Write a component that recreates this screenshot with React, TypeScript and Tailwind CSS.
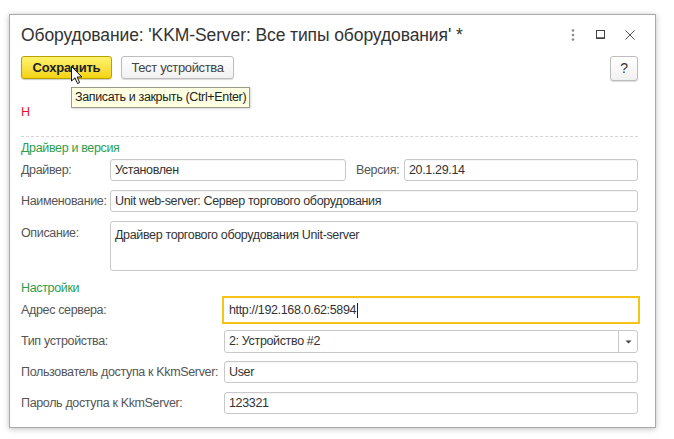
import React from "react";

const font = { fontFamily: '"Liberation Sans", Arial, sans-serif' };

function Field({ value, className = "" }: { value: string; className?: string }) {
  return (
    <div
      className={
        "h-[22px] border border-[#c9c9c9] rounded-[3px] bg-white flex items-center px-[4px] text-[12.5px] text-[#333] whitespace-nowrap shadow-[inset_0_1px_1px_rgba(0,0,0,0.04)] " +
        className
      }
    >
      {value}
    </div>
  );
}

export default function App() {
  return (
    <div className="w-[674px] h-[439px] bg-white relative overflow-hidden tracking-[-0.35px]" style={font}>
      <div className="absolute left-[9px] top-[14px] w-[647px] h-[414px] border border-[#a9a9a9] bg-white shadow-[0_1px_6px_rgba(0,0,0,0.25)] flex flex-col pl-[11px] pr-[17px]">
        {/* Title row */}
        <div className="h-[36px] mt-[2px] flex items-center">
          <div className="text-[17.5px] text-[#333] flex-1 tracking-[-0.1px] whitespace-nowrap">
            Оборудование: 'KKM-Server: Все типы оборудования' *
          </div>
          <div className="flex items-center mr-[-2px]">
            <svg width="20" height="20" viewBox="0 0 20 20" className="mr-[8px]">
              <circle cx="10" cy="5.5" r="1.3" fill="#8a8a8a" />
              <circle cx="10" cy="10" r="1.3" fill="#8a8a8a" />
              <circle cx="10" cy="14.5" r="1.3" fill="#8a8a8a" />
            </svg>
            <svg width="20" height="20" viewBox="0 0 20 20" className="mr-[9px]">
              <rect x="5.5" y="5.5" width="8" height="8" fill="none" stroke="#444" strokeWidth="1" />
              <line x1="5.5" y1="13" x2="13.5" y2="13" stroke="#444" strokeWidth="1.5" />
            </svg>
            <svg width="20" height="20" viewBox="0 0 20 20">
              <path d="M5.5 5.5 L14.5 14.5 M14.5 5.5 L5.5 14.5" stroke="#555" strokeWidth="1" />
            </svg>
          </div>
        </div>

        {/* Buttons row */}
        <div className="mt-[3px] flex items-start">
          <button className="w-[91px] h-[23px] rounded-[3px] border border-[#b8a100] bg-gradient-to-b from-[#fff36a] to-[#f3d300] text-[13px] font-bold text-[#222] flex items-center justify-center shadow-[0_1px_1px_rgba(0,0,0,0.2)] tracking-[-0.2px]">
            Сохранить
          </button>
          <button className="ml-[9px] w-[113px] h-[23px] rounded-[3px] border border-[#bdbdbd] bg-gradient-to-b from-white to-[#f1f1f1] text-[13px] text-[#444] flex items-center justify-center shadow-[0_1px_1px_rgba(0,0,0,0.15)]">
            Тест устройства
          </button>
          <div className="flex-1" />
          <button className="w-[28px] h-[25px] rounded-[3px] border border-[#bdbdbd] bg-gradient-to-b from-white to-[#f1f1f1] text-[14px] text-[#333] flex items-center justify-center shadow-[0_1px_1px_rgba(0,0,0,0.15)]">
            ?
          </button>
        </div>

        {/* Red H */}
        <div className="mt-[24px] h-[14px] text-[12.5px] text-[#e8132a] leading-[14px]">Н</div>

        {/* dashed separator */}
        <div className="mt-[17px] border-t border-dashed border-[#d4d4d4]" />

        {/* Section 1 */}
        <div className="mt-[4px] text-[12.5px] text-[#2e9d4f] leading-[14px]">Драйвер и версия</div>
        <div className="mt-[4px] flex items-center">
          <div className="w-[89px] text-[12.5px] text-[#555]">Драйвер:</div>
          <Field value="Установлен" className="w-[236px]" />
          <div className="ml-[10px] w-[48px] text-[12.5px] text-[#555]">Версия:</div>
          <Field value="20.1.29.14" className="flex-1" />
        </div>
        <div className="mt-[9px] flex items-center">
          <div className="w-[89px] text-[12.5px] text-[#555] whitespace-nowrap">Наименование:</div>
          <Field value="Unit web-server: Сервер торгового оборудования" className="flex-1" />
        </div>
        <div className="mt-[9px] flex items-start">
          <div className="w-[89px] text-[12.5px] text-[#555] pt-[3px]">Описание:</div>
          <div className="flex-1 h-[50px] border border-[#c9c9c9] rounded-[3px] px-[4px] pt-[4px] text-[12.5px] text-[#333]">
            Драйвер торгового оборудования Unit-server
          </div>
        </div>

        {/* Section 2 */}
        <div className="mt-[10px] text-[12.5px] text-[#2e9d4f] leading-[14px]">Настройки</div>
        <div className="mt-[1px] flex items-center">
          <div className="w-[201px] text-[12.5px] text-[#555]">Адрес сервера:</div>
          <div className="flex-1 mr-[-2px] h-[28px] border-2 border-[#f6c416] bg-white flex items-center px-[5px] text-[12.5px] text-[#333]">
            http://192.168.0.62:5894
            <span className="inline-block w-[1px] h-[15px] bg-[#222] ml-[1px]" />
          </div>
        </div>
        <div className="mt-[6px] flex items-center">
          <div className="w-[203px] text-[12.5px] text-[#555]">Тип устройства:</div>
          <div className="flex-1 h-[23px] border border-[#c9c9c9] rounded-[3px] bg-white flex items-center text-[12.5px] text-[#333]">
            <div className="flex-1 px-[4px]">2: Устройство #2</div>
            <div className="w-[19px] h-full border-l border-[#c9c9c9] flex items-center justify-center">
              <svg width="7" height="4" viewBox="0 0 7 4">
                <path d="M0.5 0.5 L6.5 0.5 L3.5 3.5 Z" fill="#444" />
              </svg>
            </div>
          </div>
        </div>
        <div className="mt-[8px] flex items-center">
          <div className="w-[203px] text-[12.5px] text-[#555] whitespace-nowrap">Пользователь доступа к KkmServer:</div>
          <Field value="User" className="flex-1" />
        </div>
        <div className="mt-[9px] flex items-center">
          <div className="w-[203px] text-[12.5px] text-[#555]">Пароль доступа к KkmServer:</div>
          <Field value="123321" className="flex-1" />
        </div>
      </div>

      {/* Tooltip */}
      <div className="absolute left-[71px] top-[87px] w-[179px] h-[21px] border border-[#9a9a8a] bg-[#ffffe1] text-[12.5px] text-[#222] flex items-center px-[3px] whitespace-nowrap shadow-[1px_1px_2px_rgba(0,0,0,0.15)]">
        Записать и закрыть (Ctrl+Enter)
      </div>

      {/* Cursor */}
      <svg className="absolute left-[71px] top-[66px]" width="12" height="19" viewBox="0 0 12 19">
        <path d="M0.5 0.5 L0.5 15 L4 11.8 L6.5 17.5 L8.6 16.6 L6.2 11 L10.8 11 Z" fill="white" stroke="#111" strokeWidth="1" strokeLinejoin="round" />
      </svg>
    </div>
  );
}
